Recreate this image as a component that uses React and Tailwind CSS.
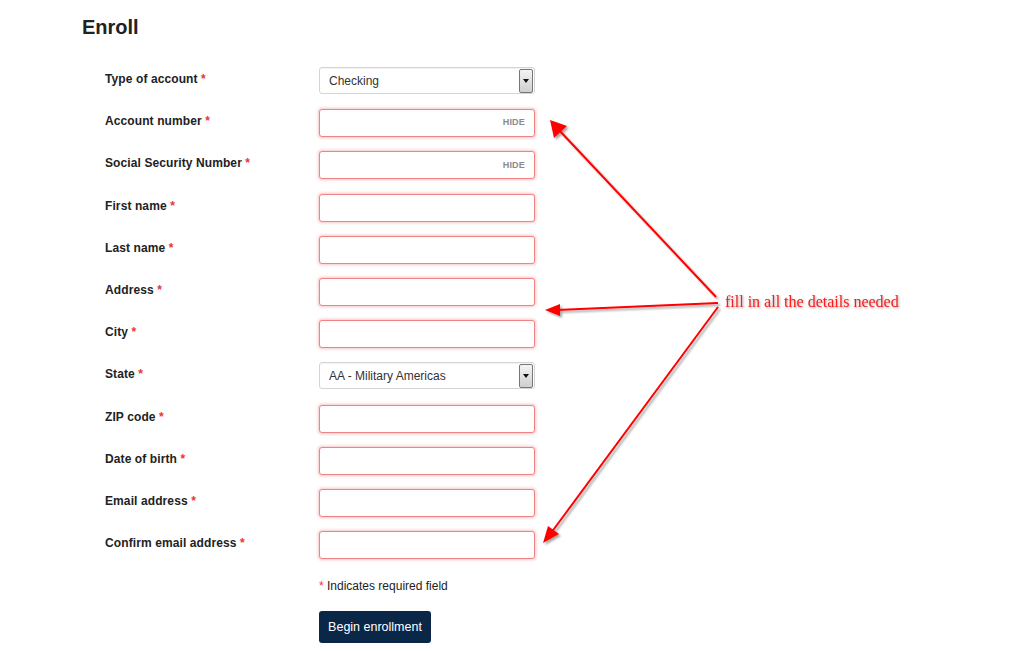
import React from "react";

const rows = [
  { label: "Type of account", kind: "select", value: "Checking" },
  { label: "Account number", kind: "hide" },
  { label: "Social Security Number", kind: "hide" },
  { label: "First name" },
  { label: "Last name" },
  { label: "Address" },
  { label: "City" },
  { label: "State", kind: "select", value: "AA - Military Americas" },
  { label: "ZIP code" },
  { label: "Date of birth" },
  { label: "Email address" },
  { label: "Confirm email address" },
];

const Field = ({ row }) => {
  if (row.kind === "select") {
    return (
      <div className="flex h-[27px] w-[216px] items-center rounded-[3px] border border-[#d4d4d4] bg-white pl-[9px] pr-[1px] shadow-[inset_0_1px_1px_rgba(0,0,0,0.05)]">
        <span className="flex-1 text-[12px] text-[#333]">{row.value}</span>
        <span className="flex h-[24px] w-[14px] items-center justify-center rounded-[2px] border border-[#777] bg-gradient-to-b from-[#f4f4f4] to-[#cfcfcf]">
          <span className="h-0 w-0 border-x-[3px] border-t-[4px] border-x-transparent border-t-[#111]" />
        </span>
      </div>
    );
  }
  return (
    <div className="flex h-[28px] w-[216px] items-center justify-end rounded-[3px] border border-[#f08484] bg-white pr-[9px] shadow-[0_0_3px_1px_rgba(240,110,110,0.4)]">
      {row.kind === "hide" && (
        <span className="text-[9px] font-bold tracking-[0.2px] text-[#8a8a8a]">HIDE</span>
      )}
    </div>
  );
};

const Annotation = () => (
  <svg className="pointer-events-none absolute left-0 top-0" width="1024" height="651">
    <defs>
      <filter id="sh" x="-10%" y="-10%" width="120%" height="120%">
        <feDropShadow dx="2" dy="2" stdDeviation="1.2" floodColor="#000" floodOpacity="0.35" />
      </filter>
    </defs>
    <g filter="url(#sh)" stroke="#ff0000" strokeWidth="2" fill="#ff0000">
      <line x1="716" y1="297" x2="558" y2="129" />
      <polygon points="550,120 554,138 567,126" stroke="none" />
      <line x1="718" y1="303" x2="557" y2="310" />
      <polygon points="545,310 560,304 560,316" stroke="none" />
      <line x1="718" y1="307" x2="551" y2="533" />
      <polygon points="543,543 548,526 559,534" stroke="none" />
    </g>
    <text
      x="725"
      y="307"
      fill="#ff1a1a"
      fontSize="16"
      fontFamily="'Liberation Serif', 'Times New Roman', serif"
      style={{ filter: "drop-shadow(1px 1px 1px rgba(0,0,0,0.35))" }}
    >
      fill in all the details needed
    </text>
  </svg>
);

export default function App() {
  return (
    <div className="relative h-[651px] w-[1024px] overflow-hidden bg-white font-['Liberation_Sans',Arial,sans-serif]">
      <div className="pl-[82px] pt-[14px]">
        <h1 className="text-[20px] font-bold leading-[26px] text-[#222]">Enroll</h1>

        <div className="pl-[23px] pt-[27px]">
          {rows.map((row) => (
            <div key={row.label} className="flex h-[42.2px] items-start">
              <div className="w-[214px] pt-[3px] text-[12px] font-bold tracking-[0.1px] text-[#222]">
                {row.label} <span className="text-[#e33]">*</span>
              </div>
              <Field row={row} />
            </div>
          ))}

          <div className="ml-[214px] pt-[4px] text-[12px] text-[#222]">
            <span className="text-[#e33]">*</span> Indicates required field
          </div>

          <button className="ml-[214px] mt-[16px] h-[32px] w-[112px] rounded-[3px] bg-[#0b2748] text-[12.5px] text-white">
            Begin enrollment
          </button>
        </div>
      </div>
      <Annotation />
    </div>
  );
}
